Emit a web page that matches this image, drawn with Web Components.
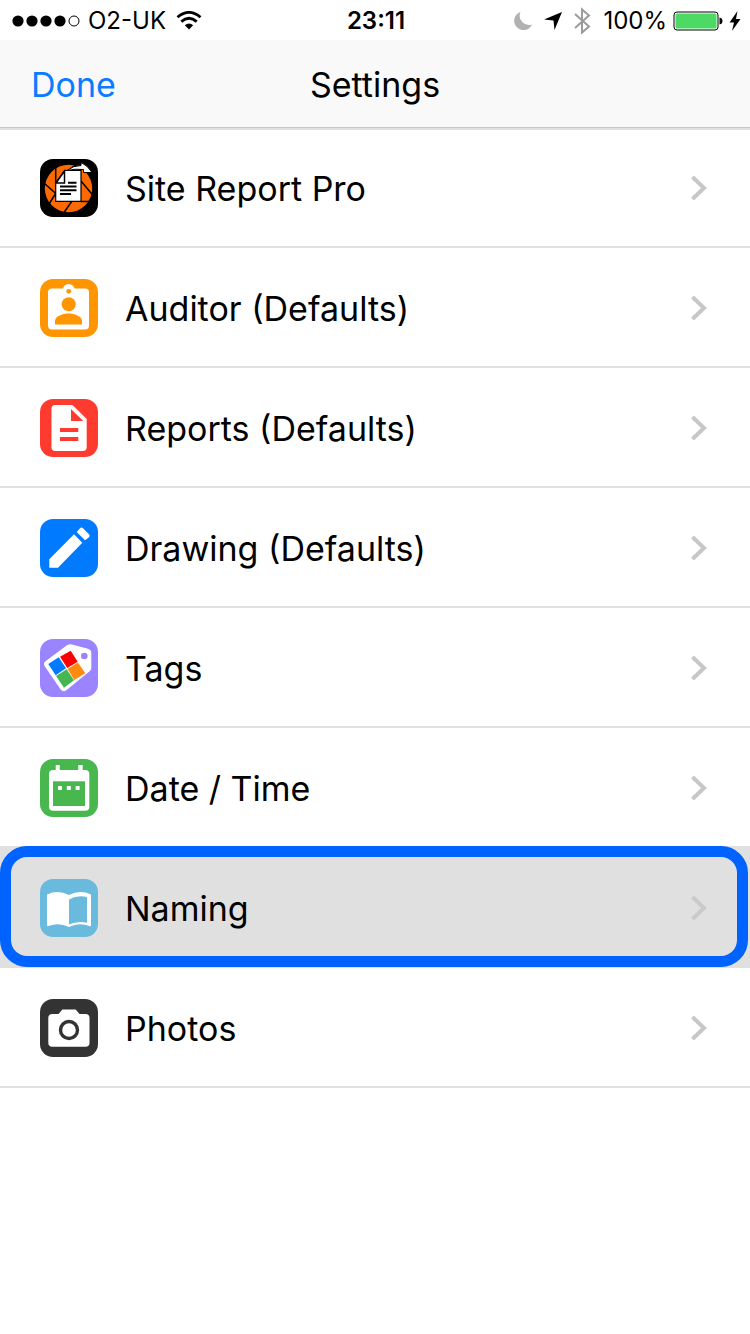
<!DOCTYPE html>
<html lang="en">
<head>
<meta charset="utf-8">
<meta name="viewport" content="width=device-width, initial-scale=1">
<title>Settings</title>
<style>
    body{
        margin: 0;
        background: #fff;
        color: #000;
        font-family: Inter, "Liberation Sans", sans-serif;
    }
</style>
</head>
<body>
<status-bar carrier="O2-UK" time="23:11" battery="100%"></status-bar>
<nav-bar>
    <button-link slot="action">Done</button-link>
    Settings
</nav-bar>
<settings-list>
    <settings-row icon="report">Site Report Pro</settings-row>
    <settings-row icon="auditor">Auditor (Defaults)</settings-row>
    <settings-row icon="document">Reports (Defaults)</settings-row>
    <settings-row icon="pencil">Drawing (Defaults)</settings-row>
    <settings-row icon="tags">Tags</settings-row>
    <settings-row icon="calendar">Date / Time</settings-row>
    <settings-row icon="book" selected>Naming</settings-row>
    <settings-row icon="camera">Photos</settings-row>
</settings-list>

<script>
// app icons, all on a 58 x 58 grid
const ICONS = {
    report: {
        color: '#000',
        art: `
        <circle cx="28.5" cy="29.5" r="23.7" fill="#ff6a00"/>
        <path d="M4.500 24.500 17 35.500M9 45 16 34M15.700 7V24M16 42H30M24 53.500 32 42M41 42.500H53M41 22 53.500 37M27 12 37 5" stroke="#000" stroke-width="1.5"/>
        <path d="M24.500 11.500H41V42.300H15.700V24Z" fill="#fff" stroke="#000" stroke-width="1.2"/>
        <path d="M24.500 12V24H16Z" fill="#fff" stroke="#000" stroke-width="1.5"/>
        <path d="M27 11.500Q33 6.500 41 6.500V3.500Q47.500 6 52 13.500H43.500V10.500Q35 9.500 27 11.500Z" fill="#fff" stroke="#000"/>
        <path d="M28 23.700h8.500M20 27.500h16.500M20 31.300h16.500M20 35h11" stroke="#000" stroke-width="1.9"/>`
    },
    auditor: {
        color: '#ff9500',
        art: `
        <rect x="8" y="9.500" width="41" height="41" rx="4" fill="#fff"/>
        <circle cx="28.700" cy="11" r="6" fill="#fff"/>
        <g fill="#ff9500">
            <circle cx="28.700" cy="12.300" r="2.400"/>
            <circle cx="28.700" cy="25.300" r="7"/>
            <path d="M15 45.500v-3.500c0-5 8-7.500 13.500-7.500s13.500 2.500 13.500 7.500v3.500z"/>
        </g>`
    },
    document: {
        color: '#ff3b30',
        art: `
        <path d="M15.500 6H32.500L46.700 20V48q0 4-4 4H15.500q-4 0-4-4V10q0-4 4-4Z" fill="#fff"/>
        <path d="M31 10V22H43.300ZM20 29h18.300v4H20zM20 38h18.300v4H20z" fill="#ff3b30"/>`
    },
    pencil: {
        color: '#007aff',
        art: `
        <path d="M9.300 48.700V40.300L34 15.300 42.300 23.700 18 48.700ZM36.700 13 40 9.200q1.500-1.500 3 0L49 15.200q1.500 1.500 0 3L45 21.300Z" fill="#fff"/>`
    },
    tags: {
        color: '#9a84ff',
        art: `
        <path d="M32 5.500 48 9.800q3.300 1 3.300 4V29q0 2-2 3.500L26 51.500q-3 2-5.500-1.200L4.500 27q-1.500-3 1.300-5L27 6.300Q29.500 4.800 32 5.500Z" fill="#fff"/>
        <circle cx="44.300" cy="17" r="3.300" fill="#9a84ff"/>
        <path d="M20 17.700 30.700 11.700 37.700 22.700 27.300 29Z" fill="#f00"/>
        <path d="M8.300 25 18.700 18.300 26 29.300 15.700 36.300Z" fill="#007aff"/>
        <path d="M27.600 30 37.900 23.500 45.300 34.300 34.300 41Z" fill="#ff8a0f"/>
        <path d="M16 37 26.700 30.300 34 41.300 24 48.700Z" fill="#45b750"/>`
    },
    calendar: {
        color: '#47b74e',
        art: `
        <rect x="9" y="11" width="40.300" height="40.700" rx="4" fill="#fff"/>
        <path d="M15.700 6h4v6h-4zM38.300 6h4.400v6h-4.400z" fill="#fff"/>
        <path d="M13 22.300h32V47H13z" fill="#47b74e"/>
        <path d="M18 27h4v4h-4zM26.800 27h4v4h-4zM35.600 27h4v4h-4z" fill="#fff"/>`
    },
    book: {
        color: '#6abade',
        art: `
        <path d="M7 15.500Q18 10.500 29 16 40 10.500 51 15.500V46.500q-.5 1-1.500.5Q39 43 29 48 19 43 8.500 47 7.500 47.500 7 46.500Z" fill="#fff"/>
        <path d="M29 20.500Q37 15.800 47 18V43.700Q37 41.500 29 45.500Z" fill="#6abade"/>`
    },
    camera: {
        color: '#333',
        art: `
        <path d="M12.300 15H18.500L22.300 10.500H35.700L39.500 15H45.500q4 0 4 4V43.700q0 4-4 4H12.300q-4 0-4-4V19q0-4 4-4Z" fill="#fff"/>
        <circle cx="29" cy="31" r="8.500" fill="none" stroke="#333" stroke-width="3.4"/>`
    }
};

class AppIcon extends HTMLElement {
    constructor(){
        super();
        this.attachShadow({mode:'open'});
    }
    getTemplate(){
        const icon = ICONS[this.getAttribute('name')];
        const template = document.createElement('template');
        template.innerHTML = `
        <svg viewBox="0 0 58 58" aria-hidden="true">
            <rect width="58" height="58" rx="13" fill="${icon.color}"/>
            ${icon.art}
        </svg>
        ${this.getStyles()}
        `;
        return template;
    }
    getStyles(){
        return `
        <style>
            :host{
                display: block;
                width: 58px;
                height: 58px;
                flex: none;
            }
            svg{
                display: block;
                width: 100%;
                height: 100%;
                fill: none;
            }
        </style>
        `;
    }
    connectedCallback(){
        this.shadowRoot.appendChild(this.getTemplate().content.cloneNode(true));
    }
}

class StatusBar extends HTMLElement {
    constructor(){
        super();
        this.attachShadow({mode:'open'});
    }
    getTemplate(){
        const template = document.createElement('template');
        template.innerHTML = `
        <div class="side">
            <svg width="68" height="12" viewBox="0 0 68 12" aria-hidden="true">
                <circle cx="6" cy="6" r="5.600"/>
                <circle cx="20" cy="6" r="5.600"/>
                <circle cx="34" cy="6" r="5.600"/>
                <circle cx="48" cy="6" r="5.600"/>
                <circle cx="62" cy="6" r="5" fill="none" stroke="#000"/>
            </svg>
            <span class="carrier">${this.getAttribute('carrier')}</span>
            <svg width="26" height="19" viewBox="0 0 26 19" aria-hidden="true">
                <path d="M1.500 6.300Q13-3.500 24.500 6.300M5.300 10.600Q13 4 20.700 10.600" fill="none" stroke="#000" stroke-width="2.800"/>
                <path d="M8.800 14.300Q13 10.800 17.200 14.300L13 18.500Z"/>
            </svg>
        </div>
        <time>${this.getAttribute('time')}</time>
        <div class="side end">
            <svg width="20" height="20" viewBox="0 0 20 20" aria-hidden="true">
                <path d="M7.500 1A9.300 9.300 0 1 0 19 13.500 9.300 9.300 0 0 1 7.500 1Z" fill="#b2b2b2"/>
            </svg>
            <svg width="20" height="20" viewBox="0 0 20 20" aria-hidden="true">
                <path d="M19 1 11.500 19 10.500 9.500 1 8.500Z"/>
            </svg>
            <svg width="18" height="28" viewBox="0 0 18 28" aria-hidden="true">
                <path d="M2 7 16 19.500 9 25.500V2.500L16 8.500 2 21" fill="none" stroke="#9b9b9b" stroke-width="2"/>
            </svg>
            <span class="percent">${this.getAttribute('battery')}</span>
            <svg width="50" height="20" viewBox="0 0 50 20" aria-hidden="true">
                <rect x="1" y="1" width="44" height="18" rx="3" fill="none" stroke="#000"/>
                <rect x="2.500" y="2.500" width="41" height="15" rx="1.500" fill="#4cd964"/>
                <path d="M46.500 6.500Q49.500 7 49.500 10T46.500 13.500Z"/>
            </svg>
            <svg width="12" height="20" viewBox="0 0 12 20" aria-hidden="true">
                <path d="M8.500 0 .5 11.500H5L3 20 11.500 8H7Z"/>
            </svg>
        </div>
        ${this.getStyles()}
        `;
        return template;
    }
    getStyles(){
        return `
        <style>
            :host{
                display: grid;
                grid-template-columns: 1fr auto 1fr;
                align-items: center;
                box-sizing: border-box;
                height: 40px;
                padding: 1px 10px 0 12px;
                font-size: 24px;
                line-height: 39px;
            }
            .side{
                display: flex;
                align-items: center;
                gap: 8px;
            }
            .end{
                justify-content: flex-end;
                gap: 10px;
            }
            .carrier{
                margin-right: 2px;
            }
            .percent{
                margin: 0 -4px 0 2px;
            }
            .end svg:last-child{
                margin-left: -4px;
            }
            time{
                font-weight: 600;
            }
            svg{
                display: block;
                flex: none;
            }
            .end{
                margin-right: -1px;
            }
        </style>
        `;
    }
    connectedCallback(){
        this.shadowRoot.appendChild(this.getTemplate().content.cloneNode(true));
    }
}

class ButtonLink extends HTMLElement {
    constructor(){
        super();
        this.attachShadow({mode:'open'});
    }
    getTemplate(){
        const template = document.createElement('template');
        template.innerHTML = `
        <button type="button"><slot></slot></button>
        <style>
            :host{
                display: block;
            }
            button{
                display: block;
                margin: 0;
                padding: 0;
                border: 0;
                background: none;
                color: #0a7cff;
                font: inherit;
                cursor: pointer;
            }
        </style>
        `;
        return template;
    }
    connectedCallback(){
        this.shadowRoot.appendChild(this.getTemplate().content.cloneNode(true));
    }
}

class NavBar extends HTMLElement {
    constructor(){
        super();
        this.attachShadow({mode:'open'});
    }
    getTemplate(){
        const template = document.createElement('template');
        template.innerHTML = `
        <slot name="action"></slot>
        <h1><slot></slot></h1>
        ${this.getStyles()}
        `;
        return template;
    }
    getStyles(){
        return `
        <style>
            :host{
                display: grid;
                grid-template-columns: 1fr auto 1fr;
                align-items: center;
                box-sizing: border-box;
                height: 88px;
                padding: 2px 31px 0;
                background: #f9f9f9;
                border-bottom: 1px solid #c6c6c6;
                font-size: 34px;
                line-height: 40px;
            }
            h1{
                margin: 0;
                font: inherit;
            }
        </style>
        `;
    }
    connectedCallback(){
        this.shadowRoot.appendChild(this.getTemplate().content.cloneNode(true));
    }
}

class SettingsList extends HTMLElement {
    constructor(){
        super();
        this.attachShadow({mode:'open'});
    }
    getTemplate(){
        const template = document.createElement('template');
        template.innerHTML = `
        <nav aria-label="Settings"><slot></slot></nav>
        <style>
            :host{
                display: block;
                box-shadow: inset 0 2px #e0e0e0;
            }
        </style>
        `;
        return template;
    }
    connectedCallback(){
        this.shadowRoot.appendChild(this.getTemplate().content.cloneNode(true));
    }
}

class SettingsRow extends HTMLElement {
    constructor(){
        super();
        this.attachShadow({mode:'open'});
        this.icon = this.getAttribute('icon');
    }
    getTemplate(){
        const template = document.createElement('template');
        template.innerHTML = `
        <a href="#${this.icon}">
            <app-icon name="${this.icon}"></app-icon>
            <span><slot></slot></span>
            <svg width="18" height="26" viewBox="0 0 18 26" aria-hidden="true">
                <path d="M2.500 2 14 13 2.500 24" fill="none" stroke="#c7c7c7" stroke-width="4"/>
            </svg>
        </a>
        ${this.getStyles()}
        `;
        return template;
    }
    getStyles(){
        return `
        <style>
            :host{
                display: block;
                position: relative;
                font-size: 34px;
                line-height: 40px;
            }
            a{
                display: flex;
                align-items: center;
                gap: 27px;
                box-sizing: border-box;
                height: 120px;
                padding: 2px 42px 0 40px;
                border-bottom: 2px solid #e0e0e0;
                color: inherit;
                text-decoration: none;
            }
            span{
                flex: 1;
                padding-top: 2px;
            }
            :host([selected]) a{
                background: #e0e0e0;
                box-shadow: 0 -2px #e0e0e0;
            }
            /* focus ring drawn over the row */
            :host([selected])::after{
                content: "";
                position: absolute;
                inset: -2px 2px 1px 0;
                border: 11px solid #0062ff;
                border-radius: 27px;
                pointer-events: none;
            }
            :host([selected]) path{
                stroke: #cacaca;
            }
        </style>
        `;
    }
    connectedCallback(){
        this.shadowRoot.appendChild(this.getTemplate().content.cloneNode(true));
    }
}

customElements.define('app-icon', AppIcon);
customElements.define('status-bar', StatusBar);
customElements.define('button-link', ButtonLink);
customElements.define('nav-bar', NavBar);
customElements.define('settings-list', SettingsList);
customElements.define('settings-row', SettingsRow);
</script>
</body>
</html>
